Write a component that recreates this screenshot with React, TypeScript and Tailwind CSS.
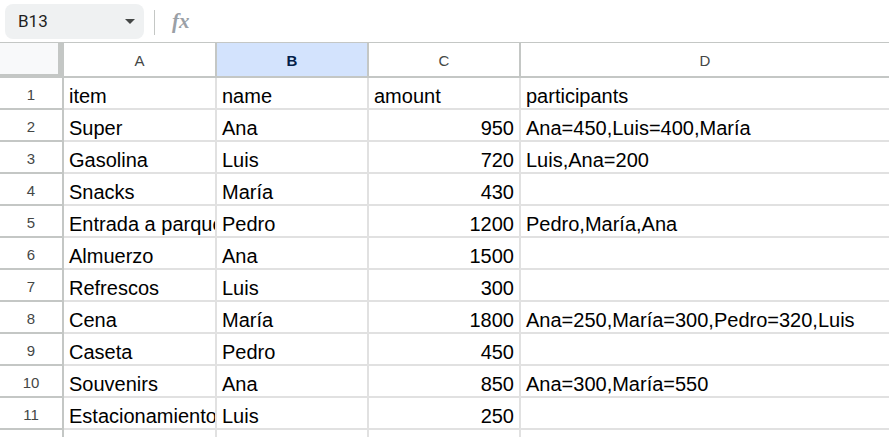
import React from "react";

const rows: string[][] = [
  ["item", "name", "amount", "participants"],
  ["Super", "Ana", "950", "Ana=450,Luis=400,María"],
  ["Gasolina", "Luis", "720", "Luis,Ana=200"],
  ["Snacks", "María", "430", ""],
  ["Entrada a parque", "Pedro", "1200", "Pedro,María,Ana"],
  ["Almuerzo", "Ana", "1500", ""],
  ["Refrescos", "Luis", "300", ""],
  ["Cena", "María", "1800", "Ana=250,María=300,Pedro=320,Luis"],
  ["Caseta", "Pedro", "450", ""],
  ["Souvenirs", "Ana", "850", "Ana=300,María=550"],
  ["Estacionamiento", "Luis", "250", ""],
  ["", "", "", ""],
];

const isNum = (s: string) => /^\d+$/.test(s);

export default function App() {
  return (
    <div
      className="w-[889px] h-[437px] overflow-hidden bg-white"
      style={{ fontFamily: '"Liberation Sans", Arial, sans-serif' }}
    >
      {/* Top bar */}
      <div className="h-[42px] flex items-start">
        <div className="mt-[4px] ml-[5px] w-[139px] h-[35px] rounded-[8px] bg-[#eff1f2] flex items-center justify-between pl-[13px] pr-[9px]">
          <span
            className="text-[17px] text-[#1f1f1f] leading-none"
            style={{ fontFamily: "Roboto, Arial, sans-serif" }}
          >
            B13
          </span>
          <svg width="10" height="5" viewBox="0 0 10 5">
            <polygon points="0,0 10,0 5,5" fill="#444746" />
          </svg>
        </div>
        <div className="mt-[10px] ml-[10px] w-px h-[25px] bg-[#c4c7c5]" />
        <span
          className="mt-[11px] ml-[17px] text-[21px] italic font-bold text-[#9aa0a6] leading-none"
          style={{ fontFamily: '"Liberation Serif", "Times New Roman", serif' }}
        >
          fx
        </span>
      </div>

      {/* Grid */}
      <div className="grid grid-cols-[64px_153px_152px_152px_1fr]">
        <div className="h-[36px] bg-[#f8f9fa] border-t border-r-[6px] border-b-[4px] border-[#c4c7c5]" />
        {["A", "B", "C", "D"].map((c, i) => (
          <div
            key={c}
            className={
              "h-[36px] flex items-center justify-center pt-[2px] text-[15px] leading-none border-t border-b-2 border-[#c4c7c5] " +
              (i < 3 ? "border-r-2 " : "") +
              (c === "B"
                ? "bg-[#d3e3fd] font-bold text-[#041e49]"
                : "bg-white text-[#444746]")
            }
          >
            {c}
          </div>
        ))}

        {rows.map((r, ri) => (
          <React.Fragment key={ri}>
            <div className="h-[32px] flex items-center justify-center pt-[2px] text-[15px] leading-none text-[#444746] border-b-2 border-r-2 border-[#c4c7c5]">
              {ri < 11 ? ri + 1 : ""}
            </div>
            {r.map((v, ci) => (
              <div
                key={ci}
                className={
                  "h-[32px] flex items-end pb-[2px] px-[5px] text-[20px] leading-none text-black whitespace-nowrap overflow-hidden border-b-2 border-[#e1e1e1] " +
                  (ci < 3 ? "border-r-2 " : "") +
                  (ri > 0 && isNum(v) ? "justify-end" : "justify-start")
                }
              >
                {v}
              </div>
            ))}
          </React.Fragment>
        ))}
      </div>
    </div>
  );
}
